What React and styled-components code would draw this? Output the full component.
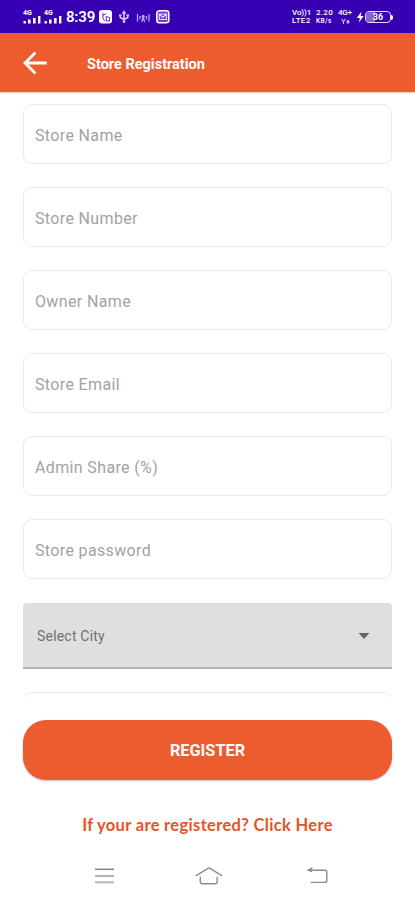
import React, { useState } from "react";
import styled, { createGlobalStyle } from "styled-components";

const FIELDS = [
  { name: "storeName", label: "Store Name" },
  { name: "storeNumber", label: "Store Number" },
  { name: "ownerName", label: "Owner Name" },
  { name: "storeEmail", label: "Store Email" },
  { name: "adminShare", label: "Admin Share (%)" },
  { name: "password", label: "Store password", type: "password" },
];

function Signal() {
  return (
    <SignalBox>
      <SignalLabel>4G</SignalLabel>
      <svg width="18" height="8" viewBox="0 0 18 8" fill="#fff">
        <rect x="0.5" y="5" width="2.4" height="2.5" />
        <rect x="5" y="3.5" width="2.6" height="4" />
        <rect x="10" y="2" width="2.6" height="5.5" />
        <rect x="15" y="0" width="2.4" height="7.5" />
      </svg>
    </SignalBox>
  );
}

function StatusIcons() {
  return (
    <svg width="73" height="16" viewBox="0 0 73 16" fill="none" stroke="#fff">
      {/* call badge */}
      <rect x="1" y="1" width="13" height="13.5" rx="3" fill="#fff" stroke="none" />
      <path d="M5 4v6l2.5 2M5 6.5l3-2M8 7.5l3.5 1v3.5h-3z" stroke="#5a33c4" strokeWidth="1" />
      {/* usb */}
      <g stroke="#d5c6f5">
        <path d="M26 3v10M22.2 6v2.5l3.8 2 3.8-2V6" strokeWidth="1.6" />
        <path d="M26 1.5l2 3h-4z" fill="#d5c6f5" strokeWidth="0.5" />
        <path d="M21 6.2h2.6M28.4 6.2H31" strokeWidth="1.6" />
        <circle cx="26" cy="12.5" r="1" fill="#d5c6f5" />
      </g>
      {/* hotspot */}
      <g stroke="#b9a3ea" strokeWidth="1.3">
        <path d="M39.5 5v7.5M42 7v3.5M51 5v7.5M48.5 7v3.5M45.2 8.5l-1.5 4.5M45.2 8.5l1.5 4.5" />
        <circle cx="45.2" cy="7.5" r="1" fill="#b9a3ea" />
      </g>
      {/* message */}
      <rect x="58.8" y="1.8" width="12" height="12" rx="2.5" fill="#6b40ca" strokeWidth="1.5" />
      <path d="M61.2 5h7.2v5.5h-7.2zM61.2 5l3.6 3.4L68.4 5" stroke="#e3dcf7" strokeWidth="1.1" />
    </svg>
  );
}

function Battery() {
  return (
    <BatteryBox>
      <svg width="9" height="14" viewBox="0 0 9 14" fill="#fff">
        <path d="M5.5 1.5L0.8 8h3L3 12.5 7.7 6h-3z" />
      </svg>
      <BatteryShell>
        <BatteryLevel />
        <BatteryText>36</BatteryText>
      </BatteryShell>
      <BatteryTip />
    </BatteryBox>
  );
}

function App() {
  const [values, setValues] = useState({});

  const handleChange = (e) => {
    setValues({ ...values, [e.target.name]: e.target.value });
  };

  return (
    <Screen>
      <GlobalStyle />
      <StatusBar>
        <Signal />
        <Signal />
        <Time>8:39</Time>
        <StatusIcons />
        <Spacer />
        <Stack $width={24}>
          <StackLine $size={8} $spacing={-0.1}>Vo))1</StackLine>
          <StackLine $size={8} $spacing={0.3}>LTE2</StackLine>
        </Stack>
        <Stack $width={22}>
          <StackLine $size={8} $spacing={0.3}>2.20</StackLine>
          <StackLine $size={6.5} $spacing={0.4}>KB/s</StackLine>
        </Stack>
        <Stack $width={18}>
          <StackLine $size={8} $spacing={-0.3}>4G+</StackLine>
          <svg width="14" height="8" viewBox="0 0 14 8" fill="none" stroke="#d5c6f5" strokeWidth="1.1">
            <path d="M3.5 2l2 2.5 2-2.5M5.5 4.5v2.5M8.5 5.5l1.5-2 1.5 2M10 3.5v3.5" />
          </svg>
        </Stack>
        <Battery />
      </StatusBar>

      <Header>
        <BackButton aria-label="Back">
          <svg width="26" height="26" viewBox="0 0 26 26" fill="none" stroke="#fff" strokeWidth="2.8">
            <path d="M24.6 13H3.5M13.5 2.5L3 13l10.5 10.5" />
          </svg>
        </BackButton>
        <Title>Store Registration</Title>
      </Header>

      <Form>
        {FIELDS.map((field) => (
          <Input
            key={field.name}
            name={field.name}
            type={field.type || "text"}
            placeholder={field.label}
            value={values[field.name] || ""}
            onChange={handleChange}
          />
        ))}
        <CitySelect>
          Select City
          <svg width="12" height="6" viewBox="0 0 12 6" fill="#666">
            <path d="M0.5 0h11L6 6z" />
          </svg>
        </CitySelect>
        <Input name="address" value={values.address || ""} onChange={handleChange} />
      </Form>

      <Footer>
        <RegisterButton>REGISTER</RegisterButton>
        <LoginLink>If your are registered? Click Here</LoginLink>
      </Footer>

      <NavBar>
        <svg width="20" height="18" viewBox="0 0 20 18" fill="none" strokeWidth="1.5">
          <path d="M0 2.3h19" stroke="#858585" />
          <path d="M0 9h19" stroke="#999" />
          <path d="M0 15.3h19" stroke="#b5b5b5" strokeWidth="2" />
        </svg>
        <svg width="28" height="18" viewBox="0 0 28 18" fill="none" stroke="#8c8c8c" strokeWidth="1.4">
          <path d="M0.8 8.8L13 1.3q1-.6 2 0l12.2 7.5M5.3 9.8v5q0 2 2 2h12.9q2 0 2-2v-5" />
        </svg>
        <svg width="21" height="18" viewBox="0 0 21 18" fill="none" stroke="#8c8c8c" strokeWidth="1.4">
          <path d="M1 3.2h17q1.8 0 1.8 2v8.2q0 2-1.8 2H3.8M5.5 .9L1 3.2l4 1.4" />
        </svg>
      </NavBar>
    </Screen>
  );
}

const GlobalStyle = createGlobalStyle`
  * {
    box-sizing: border-box;
  }

  body {
    margin: 0;
    background: #fff;
    font-family: Roboto, "Liberation Sans", sans-serif;
  }

  button {
    border: none;
    font-family: inherit;
    cursor: pointer;
  }

  svg {
    display: block;
    flex-shrink: 0;
  }
`;

const Screen = styled.div`
  display: flex;
  flex-direction: column;
  width: 415px;
  height: 900px;
  overflow: hidden;
`;

const StatusBar = styled.div`
  display: flex;
  align-items: center;
  height: 33px;
  flex-shrink: 0;
  padding: 1px 22px 0 23px;
  background: #3800b3;
  color: #fff;
`;

const SignalBox = styled.div`
  width: 18px;
  margin-right: 3px;
`;

const SignalLabel = styled.div`
  height: 6px;
  font-size: 7px;
  line-height: 6px;
  font-weight: 700;
`;

const Time = styled.div`
  width: 33px;
  padding-left: 1px;
  font-size: 15px;
  font-weight: 600;
  letter-spacing: -0.2px;
`;

const Spacer = styled.div`
  flex: 1;
`;

const Stack = styled.div`
  width: ${(props) => props.$width}px;
  flex-shrink: 0;
`;

const StackLine = styled.div`
  height: 8px;
  font-size: ${(props) => props.$size}px;
  line-height: 8px;
  font-weight: 500;
  letter-spacing: ${(props) => props.$spacing}px;
  white-space: nowrap;
`;

const BatteryBox = styled.div`
  display: flex;
  align-items: center;
`;

const BatteryShell = styled.div`
  position: relative;
  width: 26px;
  height: 12px;
  border: 1.5px solid #e3dcf7;
  border-radius: 4px;
  overflow: hidden;
`;

const BatteryLevel = styled.div`
  width: 36%;
  height: 100%;
  background: #8566d6;
`;

const BatteryText = styled.div`
  position: absolute;
  inset: 0;
  font-size: 9px;
  line-height: 10px;
  font-weight: 700;
  text-align: center;
`;

const BatteryTip = styled.div`
  width: 2px;
  height: 5px;
  border-radius: 0 2px 2px 0;
  background: #fff;
`;

const Header = styled.header`
  display: flex;
  align-items: center;
  height: 59px;
  flex-shrink: 0;
  padding: 1px 22px 0;
  background: #ed5c2e;
  box-shadow: 0 1px 1px rgba(237, 92, 46, 0.3);
`;

const BackButton = styled.button`
  width: 26px;
  margin-right: 39px;
  padding: 0;
  background: none;
`;

const Title = styled.h1`
  margin: 2px 0 0;
  color: #fff;
  font-size: 14.5px;
  font-weight: 700;
`;

const Form = styled.form`
  display: flex;
  flex-direction: column;
  gap: 23.1px;
  height: 605px;
  flex-shrink: 0;
  padding: 12px 23px 0;
  overflow: hidden;
`;

const Input = styled.input`
  width: 100%;
  height: 60px;
  flex-shrink: 0;
  padding: 2px 11px 0;
  border: 1.5px solid #e9ebeb;
  border-radius: 9px;
  background: #fff;
  color: #444;
  font-family: inherit;
  font-size: 16px;
  letter-spacing: 0.36px;
  outline: none;

  &::placeholder {
    color: #a3a3a3;
    opacity: 1;
  }
`;

const CitySelect = styled.div`
  display: flex;
  align-items: center;
  justify-content: space-between;
  height: 66px;
  flex-shrink: 0;
  padding: 2px 22px 0 14px;
  border-bottom: 2px solid #b5b5b5;
  border-radius: 4px 4px 0 0;
  background: #dfdfdf;
  color: #707070;
  font-size: 14px;
  letter-spacing: 0.2px;
`;

const Footer = styled.div`
  display: flex;
  flex-direction: column;
  align-items: center;
  height: 170px;
  flex-shrink: 0;
  padding: 23px 23px 0;
`;

const RegisterButton = styled.button`
  width: 100%;
  height: 59.5px;
  flex-shrink: 0;
  padding: 1px 0 0;
  border-radius: 23px;
  background: #ed5c2e;
  box-shadow: 0 1px 2px rgba(0, 0, 0, 0.25);
  color: #fff;
  font-size: 16.3px;
  font-weight: 700;
`;

const LoginLink = styled.a`
  margin-top: 34.5px;
  color: #e65324;
  font-family: Lato, sans-serif;
  font-size: 16.5px;
  line-height: 22px;
  font-weight: 700;
  letter-spacing: 0.33px;
  white-space: nowrap;
  cursor: pointer;
`;

const NavBar = styled.nav`
  display: grid;
  grid-template-columns: 99.5px 112px 21px;
  padding-left: 95px;
`;

export default App;
